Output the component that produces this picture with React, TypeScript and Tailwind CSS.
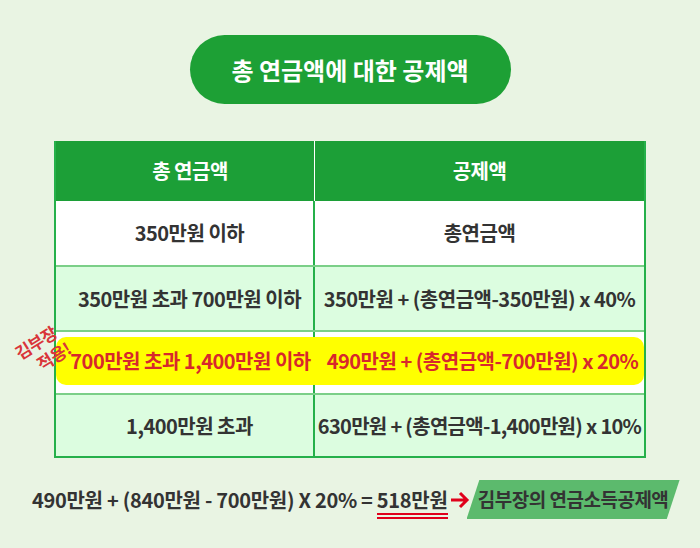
import React from 'react';

const rows = [
  { left: '350만원 이하', right: '총연금액', bg: 'bg-white' },
  { left: '350만원 초과 700만원 이하', right: '350만원 + (총연금액-350만원) x 40%', bg: 'bg-[#dcfde0]' },
];

const App: React.FC = () => {
  return (
    <div className="relative w-[700px] h-[548px] overflow-hidden bg-[#e9f4e3] flex flex-col items-center font-['Noto_Sans_CJK_KR',sans-serif] text-[#333333]">
      <div className="mt-[35px] w-[321px] h-[69px] rounded-full bg-[#1da035] flex items-center justify-center text-white text-[24px] font-bold">
        총 연금액에 대한 공제액
      </div>

      <div className="mt-[37px] w-[592px] border-x-2 border-b-2 border-[#25b04a] text-[20px] font-bold tracking-[-0.5px]">
        <div className="grid grid-cols-[259px_1fr] h-[60px] bg-[#1c9f37] text-white">
          <div className="flex items-center justify-center pl-[10px] border-r border-white">총 연금액</div>
          <div className="flex items-center justify-center">공제액</div>
        </div>

        {rows.map((row, i) => (
          <div
            key={i}
            className={`grid grid-cols-[259px_1fr] ${i === 0 ? 'h-[64px]' : 'h-[65px] border-t-2 border-[#7bcf88]'} ${row.bg}`}
          >
            <div className="flex items-center justify-center pl-[10px] border-r-2 border-[#25b04a]">{row.left}</div>
            <div className="flex items-center justify-center">{row.right}</div>
          </div>
        ))}

        <div className="relative grid grid-cols-[259px_1fr] h-[63px] border-t-2 border-[#7bcf88] bg-white">
          <div className="border-r-2 border-[#25b04a]" />
          <div />
          <div className="absolute left-0 right-0 top-[5px] bottom-[8px] rounded-[10px] bg-[#ffff00] grid grid-cols-[259px_1fr] text-[#d7282c]">
            <div className="flex items-center justify-center pl-[10px]">700만원 초과 1,400만원 이하</div>
            <div className="flex items-center justify-center pl-[6px]">490만원 + (총연금액-700만원) x 20%</div>
          </div>
        </div>

        <div className="grid grid-cols-[259px_1fr] h-[63px] border-t-2 border-[#7bcf88] bg-[#dcfde0]">
          <div className="flex items-center justify-center pl-[10px] border-r-2 border-[#25b04a]">1,400만원 초과</div>
          <div className="flex items-center justify-center tracking-[-0.7px]">630만원 + (총연금액-1,400만원) x 10%</div>
        </div>
      </div>

      <div className="self-start ml-[32px] mt-[22px] h-[39px] flex items-center text-[20px] font-bold tracking-[-0.3px]">
        <span>490만원 + (840만원 - 700만원) X 20% =&nbsp;</span>
        <span className="relative">
          518만원
          <span className="absolute left-0 right-0 top-full mt-[-2px] h-[6px] border-y-2 border-[#e0001b]" />
        </span>
        <svg width="20" height="18" viewBox="0 0 20 18" className="ml-[2px]">
          <path d="M1 9 H17 M10 2 L17 9 L10 16" fill="none" stroke="#e0001b" strokeWidth="3" />
        </svg>
        <div className="ml-[-3px] w-[213px] h-[39px] bg-[#5cba6d] [clip-path:polygon(6%_0,100%_0,94%_100%,0_100%)] flex items-center justify-center text-[19px] tracking-[-0.5px] text-[#333333]">
          김부장의 연금소득공제액
        </div>
      </div>

      <div className="absolute left-[15px] top-[330px] -rotate-[32deg] text-[#d9353a] text-[17px] font-bold leading-[21px] text-center tracking-[-0.5px]">
        김부장
        <br />
        <span className="pl-[16px]">적용!</span>
      </div>
    </div>
  );
};

export default App;
